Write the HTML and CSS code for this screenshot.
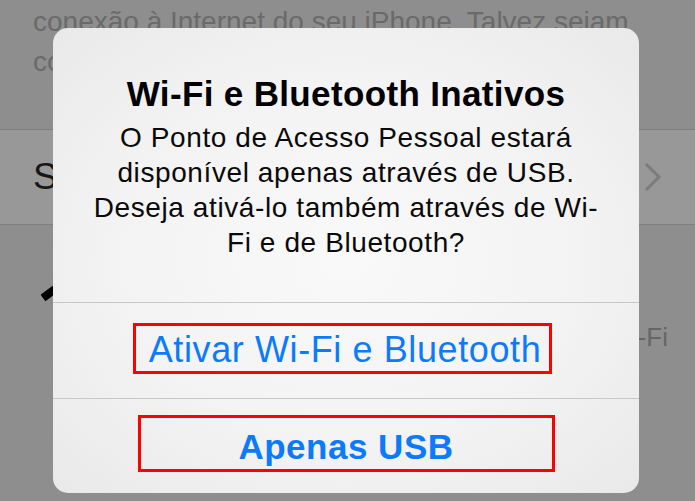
FILE: index.html
```html
<!DOCTYPE html>
<html lang="pt">
<head>
    <meta charset="UTF-8">
    <title>Ponto de Acesso Pessoal</title>
    <link rel="stylesheet" href="styles.css">
</head>
<body>
    <div id="screen">
        <div class="note">conexão à Internet do seu iPhone. Talvez sejam<br>cobradas tarifas adicionais.</div>
        <div class="row">
            <span class="row-label">Senha do Wi-Fi</span>
            <svg class="chevron" width="20" height="30" viewBox="0 0 20 30">
                <polyline points="3,2 16,15 3,28" fill="none" stroke="#7c7c7c" stroke-width="3"/>
            </svg>
        </div>
        <div class="steps">
            <svg class="step-icon" width="20" height="20" viewBox="0 0 20 20">
                <line x1="5" y1="12" x2="17" y2="3" stroke="#000" stroke-width="8"/>
            </svg>
            <span class="step-text">Ative o Wi-Fi</span>
        </div>

        <div class="alert">
            <div class="alert-head">
                <h1>Wi-Fi e Bluetooth Inativos</h1>
                <p>O Ponto de Acesso Pessoal estará<br>disponível apenas através de USB.<br>Deseja ativá-lo também através de Wi-<br>Fi e de Bluetooth?</p>
            </div>
            <div class="alert-btn btn-first">
                <span class="mark mark-first">Ativar Wi-Fi e Bluetooth</span>
            </div>
            <div class="alert-btn btn-last">
                <span class="mark mark-last">Apenas USB</span>
            </div>
        </div>
    </div>
</body>
</html>
```

FILE: styles.css
```css
*{margin:0;padding:0;box-sizing:border-box;}
html,body{width:100%;height:100%;}
body{background:#8e8e8e;font-family:"Liberation Sans",Arial,sans-serif;overflow:hidden;}
#screen{position:relative;width:695px;height:501px;}

.note{
    height:129px;
    padding:2px 0 0 33px;
    font-size:28px;
    line-height:40px;
    color:#6a6a6a;
    white-space:nowrap;
}
.row{
    height:96px;
    border-top:1px solid #7e7e7e;
    border-bottom:1px solid #7e7e7e;
    background:#989898;
    display:flex;
    align-items:center;
    justify-content:space-between;
    padding:0 32px 0 33px;
}
.row-label{font-size:37px;color:#161616;}
.chevron{display:block;}

.steps{
    display:flex;
    justify-content:space-between;
    align-items:flex-start;
    padding:61px 27px 0 38px;
}
.step-icon{display:block;}
.step-text{margin-top:36px;font-size:26px;line-height:30px;color:#666;}

.alert{
    position:absolute;
    top:28px;
    left:53px;
    width:586px;
    height:465px;
    border-radius:15px;
    overflow:hidden;
    background:radial-gradient(ellipse at center,#f9f9f9 0%,#f3f3f3 55%,#e9e9e9 100%);
    text-align:center;
}
.alert-head{height:274px;padding-top:46px;}
.alert-head h1{
    font-size:35px;
    line-height:40px;
    font-weight:bold;
    letter-spacing:0.35px;
    color:#000;
}
.alert-head p{
    margin-top:6px;
    font-size:28px;
    line-height:35px;
    letter-spacing:0.6px;
    color:#0a0a0a;
}
.alert-btn{
    border-top:1px solid #c7c7cc;
    display:flex;
    justify-content:center;
    align-items:flex-start;
}
.btn-first{height:96px;padding-top:20px;}
.btn-last{height:95px;padding-top:16px;}

.mark{
    display:block;
    border:3px solid #ff0000;
    color:#0b7bfb;
    white-space:nowrap;
}
.mark-first{
    width:419px;
    height:51px;
    margin-right:7px;
    padding:2px 0 0 5px;
    font-size:36px;
    line-height:43px;
    letter-spacing:0.6px;
}
.mark-last{
    width:417px;
    height:57px;
    padding-top:6px;
    font-size:35px;
    line-height:45px;
    font-weight:bold;
    letter-spacing:0.5px;
}
```
